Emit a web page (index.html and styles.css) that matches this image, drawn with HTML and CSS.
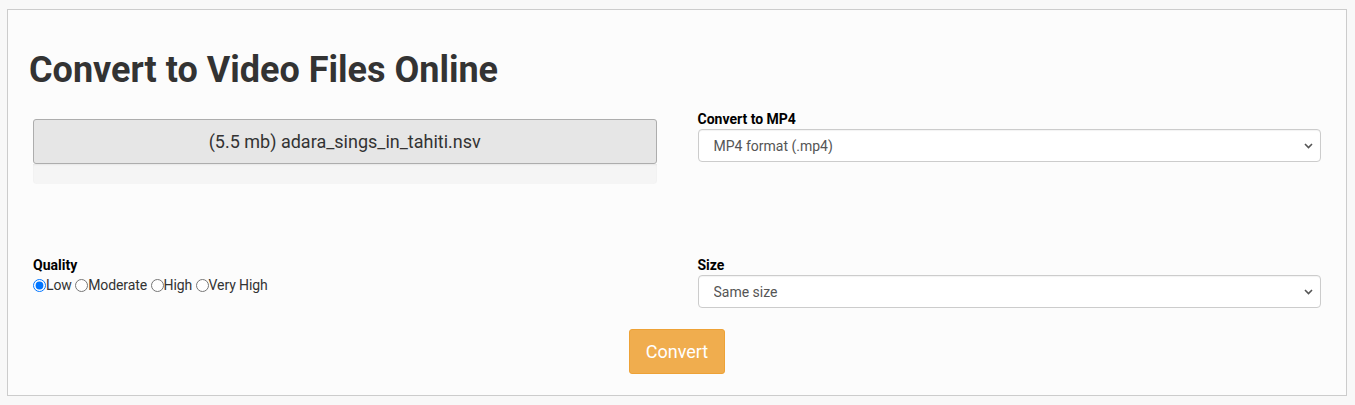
FILE: index.html
```html
<!DOCTYPE html>
<html lang="en">
<head>
    <meta charset="UTF-8">
    <meta name="viewport" content="width=device-width, initial-scale=1.0">
    <title>Convert to Video Files Online</title>
    <link rel="stylesheet" href="styles.css">
</head>
<body>
    <div class="frame">
        <h1>Convert to Video Files Online</h1>
        <div class="row">
            <div class="col">
                <div class="file-box">(5.5 mb) adara_sings_in_tahiti.nsv</div>
                <div class="progress"></div>
            </div>
            <div class="col">
                <label class="field-label">Convert to MP4</label>
                <div class="select-wrap">
                    <select>
                        <option>MP4 format (.mp4)</option>
                    </select>
                    <svg class="chevron" width="9" height="6" viewBox="0 0 9 6"><path d="M1 1l3.5 3.5L8 1" fill="none" stroke="#555" stroke-width="1.6"/></svg>
                </div>
            </div>
        </div>
        <div class="row second">
            <div class="col">
                <label class="field-label">Quality</label>
                <div class="radios">
                    <label><input type="radio" name="q" checked>Low</label>
                    <label><input type="radio" name="q">Moderate</label>
                    <label><input type="radio" name="q">High</label>
                    <label><input type="radio" name="q">Very High</label>
                </div>
            </div>
            <div class="col">
                <label class="field-label">Size</label>
                <div class="select-wrap">
                    <select>
                        <option>Same size</option>
                    </select>
                    <svg class="chevron" width="9" height="6" viewBox="0 0 9 6"><path d="M1 1l3.5 3.5L8 1" fill="none" stroke="#555" stroke-width="1.6"/></svg>
                </div>
            </div>
        </div>
        <div class="actions">
            <button class="btn">Convert</button>
        </div>
    </div>
</body>
</html>
```

FILE: styles.css
```css
body {
    margin: 0;
    padding: 9px 8px 9px 7px;
    background: #f8f8f8;
    font-family: Roboto, "Liberation Sans", sans-serif;
    color: #333;
}
.frame {
    border: 1px solid #ccc;
    background: #fcfcfc;
    padding: 0 25px 20px 25px;
    height: 387px;
    box-sizing: border-box;
}
h1 {
    font-size: 36px;
    font-weight: 700;
    line-height: 40px;
    margin: 40px 0 19px -4px;
    color: #333;
}
.row {
    display: grid;
    grid-template-columns: 1fr 1fr;
    column-gap: 41px;
}
.second {
    margin-top: 71px;
}
.file-box {
    margin-top: 10px;
    height: 45px;
    box-sizing: border-box;
    border: 1px solid #adadad;
    border-radius: 3px;
    background: #e6e6e6;
    font-size: 18px;
    line-height: 43px;
    text-align: center;
    color: #333;
}
.progress {
    height: 20px;
    background: #f5f5f5;
    border-radius: 0 0 4px 4px;
    box-shadow: inset 0 1px 2px rgba(0, 0, 0, 0.06);
}
.field-label {
    display: block;
    font-size: 14px;
    font-weight: 700;
    line-height: 20px;
    color: #000;
}
.select-wrap {
    position: relative;
}
select {
    -webkit-appearance: none;
    appearance: none;
    width: 100%;
    height: 33px;
    border: 1px solid #ccc;
    border-radius: 4px;
    background: #fff;
    padding: 0 15px;
    font-family: Roboto, "Liberation Sans", sans-serif;
    font-size: 14px;
    color: #555;
    box-shadow: inset 0 1px 1px rgba(0, 0, 0, 0.05);
}
.chevron {
    position: absolute;
    right: 8px;
    top: 14px;
}
.radios {
    font-size: 14px;
    line-height: 17px;
    color: #333;
    padding-top: 2px;
}
.radios label {
    margin-right: 0;
    letter-spacing: -0.1px;
}
.radios input {
    margin: 0;
    width: 13px;
    height: 13px;
    vertical-align: -2px;
}
.actions {
    text-align: center;
    margin-top: 21px;
}
.btn {
    font-family: Roboto, "Liberation Sans", sans-serif;
    font-size: 18px;
    line-height: 23px;
    padding: 10px 16px;
    color: #fff;
    background: #f0ad4e;
    border: 1px solid #eea236;
    border-radius: 3px;
}
```
